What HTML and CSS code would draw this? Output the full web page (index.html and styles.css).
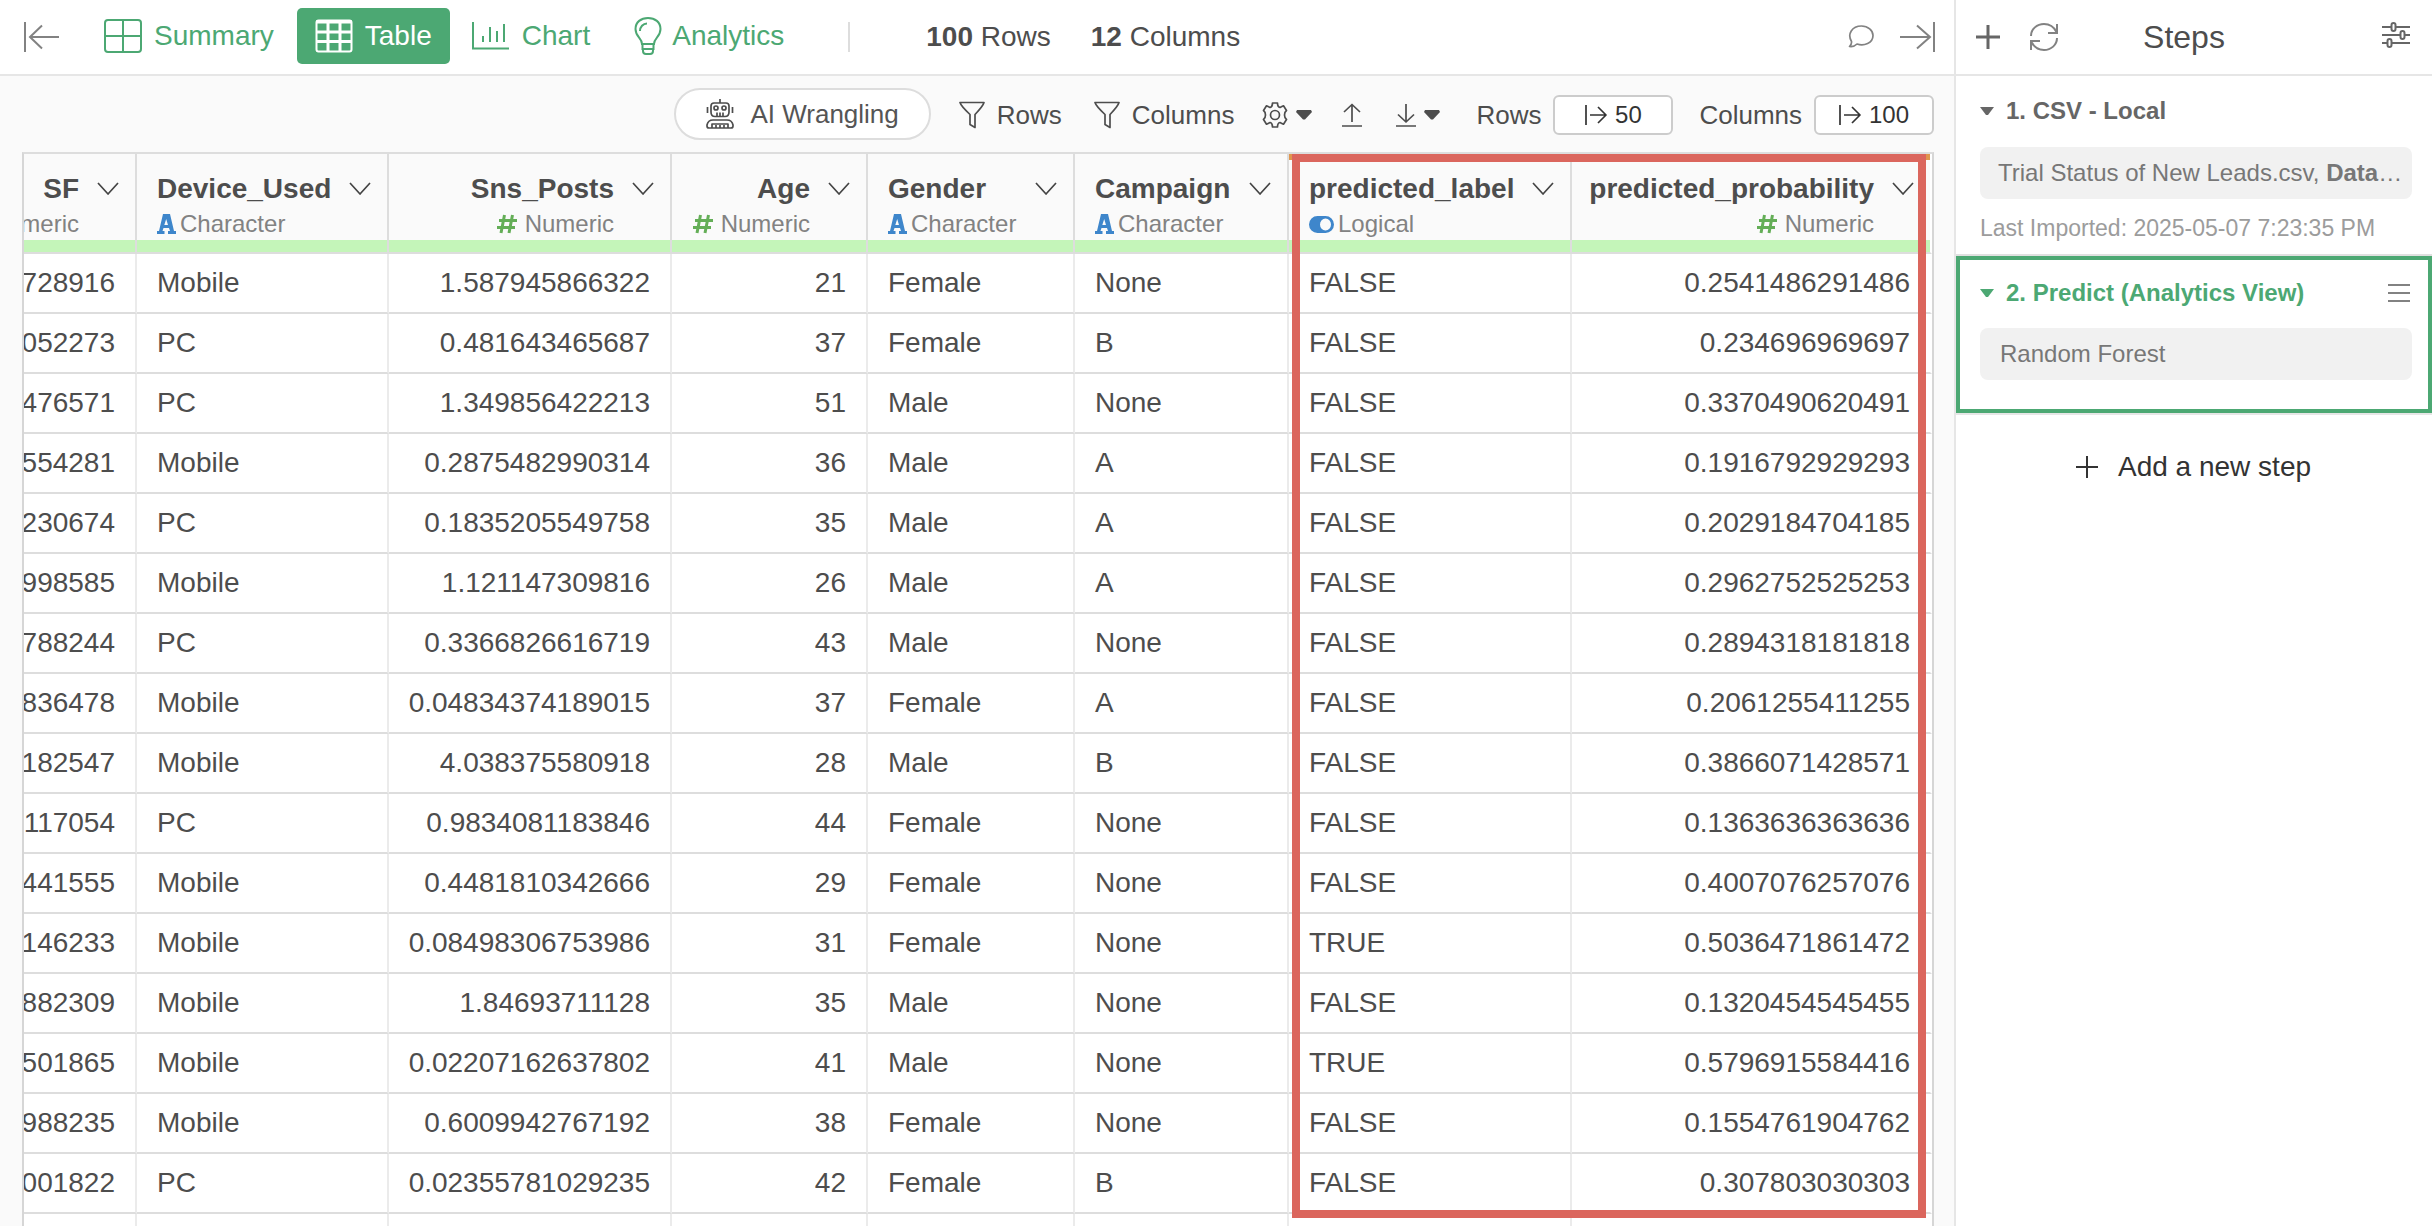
FILE: index.html
```html
<!DOCTYPE html>
<html lang="en">
<head>
<meta charset="utf-8">
<title>Data table</title>
<link rel="stylesheet" href="styles.css">
</head>
<body>
<div class="app">
  <main class="main">
    <header class="topbar">
      <button class="icon-btn" aria-label="Collapse left"><svg width="36" height="30" viewBox="0 0 36 30" class="ln gray"><path d="M1 0V30M6 15H35M18 3.500L6 15L18 26.500"/></svg></button>
      <nav class="tabs">
        <a class="tab" href="#summary"><svg width="38" height="34" viewBox="0 0 38 34" class="ln"><rect x="1" y="1" width="36" height="32" rx="3"/><path d="M19 1V33M1 17H37"/></svg>Summary</a>
        <a class="tab active" href="#table"><svg width="38" height="34" viewBox="0 0 38 34" class="ln"><rect x="1.500" y="1.500" width="35" height="31" rx="2"/><path stroke-width="3" d="M1 3H37M13 3V33M25 3V33M1 13H37M1 22.500H37"/></svg>Table</a>
        <a class="tab" href="#chart"><svg width="38" height="30" viewBox="0 0 38 30" class="ln"><path d="M1 1V27.500H37M11 21V15M18 21V6M25 21V10M32 21V3"/></svg>Chart</a>
        <a class="tab bulb" href="#analytics"><svg width="28" height="38" viewBox="0 0 28 38" class="ln"><path d="M8 27C8 21 1.500 20 1.500 12C1.500 5 7 1 14 1S26.500 5 26.500 12C26.500 20 20 21 20 27ZM8.500 27V32H19.500V27M9 32V34Q9 37 12 37H16Q19 37 19 34V32M6 14C6 10 9 6.500 13 6.500"/></svg>Analytics</a>
      </nav>
      <span class="divider"></span>
      <p class="count"><b>100</b> Rows</p>
      <p class="count"><b>12</b> Columns</p>
      <div class="topbar-end">
        <button class="icon-btn" aria-label="Comments"><svg width="26" height="24" viewBox="0 0 26 24" class="ln gray thin"><path d="M3.500 16.500C-1 9 4 1 13.500 1C20 1 25 5.500 25 10.500C25 18 16 21.500 9 19C7 21 4.500 22 1.500 21.500C3 20 3.800 18.500 3.500 16.500Z"/></svg></button>
        <button class="icon-btn" aria-label="Collapse right"><svg width="36" height="30" viewBox="0 0 36 30" class="ln gray"><path d="M34 0V30M0 15H30M17 3.500L30 15L17 26.500"/></svg></button>
      </div>
    </header>

    <div class="toolbar">
      <button class="ai"><svg width="28" height="32" viewBox="0 0 28 32" class="ln thin"><path d="M14 1V5M1.500 9V15M26.500 9V15M5 8Q5 5 8 5H20Q23 5 23 8V14Q23 18.500 19 18.500H9Q5 18.500 5 14ZM11 18V14.500M14 18V14.500M17 18V14.500"/><circle cx="10" cy="10" r="2"/><circle cx="18" cy="10" r="2"/><path d="M7 22H21Q26 22 27 27V28Q27 30 25 30H3Q1 30 1 28V27Q2 22 7 22ZM6 30V26H22V30M10 30V27M14 30V27M18 30V27"/></svg>AI Wrangling</button>
      <button class="tool"><svg width="26" height="28" viewBox="0 0 26 28" class="ln thin"><path d="M1 1.500H25Q24 5 16 13.500V26.500L11 23.500V13.500Q2 5 1 1.500Z"/></svg>Rows</button>
      <button class="tool second"><svg width="26" height="28" viewBox="0 0 26 28" class="ln thin"><path d="M1 1.500H25Q24 5 16 13.500V26.500L11 23.500V13.500Q2 5 1 1.500Z"/></svg>Columns</button>
      <button class="tool gear" aria-label="Settings"><svg width="26" height="26" viewBox="0 0 26 26" class="ln thin"><circle cx="13" cy="13" r="4.500"/><path d="M10.500 1H15.500Q15.500 5 18 5.500Q20 4.500 21.500 3.800L24.500 8.500Q22.500 10 22.500 13Q22.500 16 24.500 17.500L21.500 22.200Q20 21.500 18 20.500Q15.500 21 15.500 25H10.500Q10.500 21 8 20.500Q6 21.500 4.500 22.200L1.500 17.500Q3.500 16 3.500 13Q3.500 10 1.500 8.500L4.500 3.800Q6 4.500 8 5.500Q10.500 5 10.500 1Z"/></svg><svg width="16" height="10" viewBox="0 0 16 10" class="fill"><path d="M1 0H15L16 2L9 9.500H7L0 2Z"/></svg></button>
      <button class="tool up" aria-label="Upload"><svg width="20" height="24" viewBox="0 0 20 24" class="ln thin"><path d="M0 23H20M10 19V1.500M2 9L10 1.500L18 9"/></svg></button>
      <button class="tool down" aria-label="Download"><svg width="20" height="24" viewBox="0 0 20 24" class="ln thin"><path d="M0 23H20M10 1V19M2 11.500L10 19L18 11.500"/></svg><svg width="16" height="10" viewBox="0 0 16 10" class="fill"><path d="M1 0H15L16 2L9 9.500H7L0 2Z"/></svg></button>
      <div class="limit"><span id="lr">Rows</span><button class="limit-btn" aria-describedby="lr"><svg width="22" height="20" viewBox="0 0 22 20" class="ln thin"><path d="M1 0V20M5 10H21M13 2L21 10L13 18"/></svg>50</button></div>
      <div class="limit cols"><span id="lc">Columns</span><button class="limit-btn" aria-describedby="lc"><svg width="22" height="20" viewBox="0 0 22 20" class="ln thin"><path d="M1 0V20M5 10H21M13 2L21 10L13 18"/></svg>100</button></div>
    </div>

    <div class="grid-wrap">
      <div class="grid">
        <table>
          <colgroup><col class="c-sf"><col class="c-device"><col class="c-posts"><col class="c-age"><col class="c-gender"><col class="c-campaign"><col class="c-label"><col class="c-prob"></colgroup>
          <thead id="head"></thead>
          <tbody id="body"></tbody>
        </table>
        <div class="highlight"></div>
      </div>
    </div>
  </main>

  <aside class="steps">
    <header class="steps-head">
      <div class="steps-tools">
        <button class="icon-btn" aria-label="Add"><svg width="24" height="24" viewBox="0 0 24 24" class="ln dark"><path stroke-width="3" d="M12 0V24M0 12H24"/></svg></button>
        <button class="icon-btn" aria-label="Refresh"><svg width="28" height="28" viewBox="0 0 28 28" class="ln gray"><path d="M1 13C1 6 7 1 14 1C19.500 1 24 4 26.500 9M27 1V10H18M27 15C27 22 21 27 14 27C8.500 27 4 24 1.500 19M1 27V18H10"/></svg></button>
      </div>
      <h1>Steps</h1>
      <button class="icon-btn" aria-label="Step settings"><svg width="28" height="26" viewBox="0 0 28 26" class="ln dark"><path d="M0 5H9M14 5H28M0 13H18M23 13H28M0 21H5M10 21H28"/><rect x="9.500" y="1" width="4" height="8" rx="2"/><rect x="18.500" y="9" width="4" height="8" rx="2"/><rect x="5.500" y="17" width="4" height="8" rx="2"/></svg></button>
    </header>
    <section class="step">
      <h2><svg width="14" height="8" viewBox="0 0 14 8" class="fill"><path d="M0 0H14L8 8H6Z"/></svg>1. CSV - Local</h2>
      <p class="pill tight">Trial Status of New Leads.csv, <b>Data</b>…</p>
      <p class="note">Last Imported: 2025-05-07 7:23:35 PM</p>
    </section>
    <section class="step selected">
      <div class="step-row">
        <h2><svg width="14" height="8" viewBox="0 0 14 8" class="fill"><path d="M0 0H14L8 8H6Z"/></svg>2. Predict (Analytics View)</h2>
        <button class="icon-btn" aria-label="Step menu"><svg width="22" height="18" viewBox="0 0 22 18" class="ln gray"><path d="M0 1H22M0 9H22M0 17H22"/></svg></button>
      </div>
      <p class="pill">Random Forest</p>
    </section>
    <button class="add"><svg width="22" height="22" viewBox="0 0 22 22" class="ln"><path d="M11 0V22M0 11H22"/></svg>Add a new step</button>
  </aside>
</div>
<script src="table.js"></script>
</body>
</html>
```
FILE: styles.css
```css
* { box-sizing: border-box; }
body { margin: 0; background: #fff; color: #4d4d4d; font: 28px/32px "Liberation Sans", Arial, sans-serif; }
h1, h2, p { margin: 0; font-weight: normal; }
button { padding: 0; border: 0; background: none; color: inherit; font: inherit; cursor: pointer; }
svg { display: block; flex: none; }
.ln { fill: none; stroke: currentColor; stroke-width: 2; }
.ln.thin { stroke-width: 1.7; stroke-linejoin: round; }
.fill { fill: currentColor; }
.gray { color: #828282; }
.dark { color: #666; }
.icon-btn { display: flex; }

.app { display: grid; grid-template-columns: minmax(0, 1fr) 478px; height: 100vh; overflow: hidden; }
.main { display: flex; flex-direction: column; min-width: 0; min-height: 0; background: #fafafa; }

.topbar { display: flex; align-items: center; flex: none; height: 76px; padding: 0 18px 0 24px; border-bottom: 2px solid #e6e6e6; background: #fff; }
.tabs { display: flex; align-items: center; margin-left: 26px; }
.tab { display: flex; align-items: center; gap: 12px; height: 56px; margin-bottom: 2px; padding: 0 18px; border-radius: 5px; color: #4ca873; text-decoration: none; }
.tab.active { margin: 0 4px 2px 5px; background: #4ca873; color: #fff; }
.tab.bulb { margin-left: 8px; gap: 10px; }
.divider { width: 2px; height: 30px; margin: 0 76px 0 46px; background: #ddd; }
.count { margin-right: 40px; }
.topbar-end { display: flex; align-items: center; gap: 26px; margin-left: auto; }

.toolbar { display: flex; align-items: center; justify-content: flex-end; flex: none; height: 76px; padding: 2px 20px 0; font-size: 26px; }
.ai { display: flex; align-items: center; gap: 16px; height: 52px; margin-bottom: 2px; padding: 0 30px; border: 2px solid #ddd; border-radius: 26px; background: #fff; color: #555; }
.ai svg { color: #4d4d4d; }
.tool { display: flex; align-items: center; gap: 12px; margin-left: 28px; }
.tool.second { margin-left: 32px; }
.tool.gear { gap: 8px; }
.tool.up { margin-left: 30px; }
.tool.down { margin-left: 34px; gap: 8px; }
.limit { display: flex; align-items: center; gap: 12px; margin-left: 36px; }
.limit.cols { margin-left: 26px; }
.limit-btn { display: flex; align-items: center; justify-content: center; gap: 8px; width: 120px; height: 40px; border: 2px solid #ccc; border-radius: 6px; background: #fff; color: #333; font-size: 24px; }

.grid-wrap { flex: 1; min-height: 0; padding: 0 20px 0 22px; }
.grid { position: relative; height: 100%; overflow: hidden; border: 2px solid #ccc; border-color: #ddd #d6d6d6; border-bottom: 0; background: #fff; }
table { width: 100%; table-layout: fixed; border-collapse: separate; border-spacing: 0; }
.c-sf { width: 113px; }
.c-device { width: 252px; }
.c-posts { width: 283px; }
.c-age { width: 196px; }
.c-gender { width: 207px; }
.c-campaign { width: 214px; }
.c-label { width: 283px; }
th { height: 100px; padding: 19px 16px 0 20px; border-right: 2px solid #ddd; border-bottom: 2px solid #ddd; background: linear-gradient(#c4f5b9, #c4f5b9) bottom / 100% 12px no-repeat #fafafa; text-align: left; vertical-align: top; overflow: hidden; }
th.made { box-shadow: inset 0 6px #e0964e; }
.name { display: flex; align-items: center; justify-content: space-between; gap: 18px; }
.type { display: flex; align-items: center; gap: 4px; height: 28px; margin-top: 5px; color: #828282; font-weight: normal; font-size: 24px; line-height: 28px; }
.a { color: #3e86cb; }
.hash { color: #64ae57; }
.num .name { justify-content: flex-end; }
.num .type { justify-content: flex-end; gap: 8px; margin-right: 40px; }
.name svg { color: #444; }
td { height: 60px; padding: 0 20px; border-right: 2px solid #ebebeb; border-bottom: 2px solid #ddd; overflow: hidden; }
td.num > span { display: flex; justify-content: flex-end; }
th:first-child, td:first-child { padding-left: 0; }
th:last-child, td:last-child { border-right-color: #fff; }
.highlight { position: absolute; top: 0; right: 6px; width: 634px; height: 1064px; border: 8px solid #db665d; }

.steps { border-left: 2px solid #e6e6e6; background: #fff; }
.steps-head { display: grid; grid-template-columns: 1fr auto 1fr; align-items: center; height: 76px; padding: 0 22px 0 20px; border-bottom: 2px solid #e6e6e6; }
.steps-head > .icon-btn { justify-self: end; margin-bottom: 4px; }
.steps-head h1 { margin-right: 18px; font-size: 32px; }
.steps-tools { display: flex; align-items: center; gap: 30px; }
.step { padding: 20px 20px 0 24px; border-bottom: 2px solid #e0e0e0; font-size: 24px; line-height: 30px; }
.step h2 { display: flex; align-items: center; gap: 12px; color: #666; font-size: 24px; font-weight: bold; }
.pill { height: 52px; padding: 0 20px; border-radius: 8px; background: #f1f1f1; color: #777; line-height: 52px; white-space: nowrap; overflow: hidden; }
.pill.tight { margin-top: 21px; padding: 0 8px 0 18px; }
.note { margin-top: 14px; padding-bottom: 11px; color: #9c9c9c; font-size: 23px; }
.selected { padding: 18px 18px 29px 20px; border: 4px solid #4ca873; }
.selected h2 { color: #4ca873; }
.step-row { display: flex; align-items: center; justify-content: space-between; }
.selected .pill { margin-top: 20px; margin-right: -2px; }
.add { display: flex; align-items: center; gap: 20px; width: 100%; padding: 36px 0 0 120px; border-top: 2px solid #e6e6e6; color: #333; }
```
FILE: table.js
```js
const columns = [
  ["SF", "n"], ["Device_Used", "c"], ["Sns_Posts", "n"], ["Age", "n"],
  ["Gender", "c"], ["Campaign", "c"], ["predicted_label", "l"], ["predicted_probability", "n"]
];
const rows = `728916|Mobile|1.587945866322|21|Female|None|FALSE|0.2541486291486
052273|PC|0.481643465687|37|Female|B|FALSE|0.234696969697
476571|PC|1.349856422213|51|Male|None|FALSE|0.3370490620491
554281|Mobile|0.2875482990314|36|Male|A|FALSE|0.1916792929293
230674|PC|0.1835205549758|35|Male|A|FALSE|0.2029184704185
998585|Mobile|1.121147309816|26|Male|A|FALSE|0.2962752525253
788244|PC|0.3366826616719|43|Male|None|FALSE|0.2894318181818
836478|Mobile|0.04834374189015|37|Female|A|FALSE|0.2061255411255
182547|Mobile|4.038375580918|28|Male|B|FALSE|0.3866071428571
117054|PC|0.9834081183846|44|Female|None|FALSE|0.1363636363636
441555|Mobile|0.4481810342666|29|Female|None|FALSE|0.4007076257076
146233|Mobile|0.08498306753986|31|Female|None|TRUE|0.5036471861472
882309|Mobile|1.84693711128|35|Male|None|FALSE|0.1320454545455
501865|Mobile|0.02207162637802|41|Male|None|TRUE|0.5796915584416
988235|Mobile|0.6009942767192|38|Female|None|FALSE|0.1554761904762
001822|PC|0.02355781029235|42|Female|B|FALSE|0.307803030303
|||||||`.split("\n").map(r => r.split("|"));

const chevron = '<svg width="22" height="14" viewBox="0 0 22 14" class="ln thin"><path d="M1 1L11 12L21 1"/></svg>';
const types = {
  n: '<svg width="20" height="20" viewBox="0 0 20 20" class="ln hash"><path stroke-width="3" d="M7.500 1L4 19M15.500 1L12 19M2 6.500H20M0 13.500H18"/></svg>Numeric',
  c: '<svg width="19" height="20" viewBox="0 0 19 20" class="a fill"><path fill-rule="evenodd" d="M6 0H13L17 17H19V20H11V17H13L12 14H6.500L5.500 17H7.500V20H0V17H2ZM9.200 5L7.300 11H11Z"/></svg>Character',
  l: '<svg width="25" height="17" viewBox="0 0 25 17" class="a fill"><path fill-rule="evenodd" d="M8.500 0H16.500A8.500 8.500 0 0 1 16.500 17H8.500A8.500 8.500 0 0 1 8.500 0ZM16.500 2.500A5.500 6 0 0 0 16.500 14.500A5.500 6 0 0 0 16.500 2.500Z"/></svg>Logical'
};

document.getElementById("head").innerHTML = "<tr>" + columns.map(([name, type], i) =>
  `<th scope="col" class="${type === "n" ? "num" : ""}${i > 5 ? " made" : ""}"><div class="name">${name}${chevron}</div><div class="type">${types[type]}</div></th>`
).join("") + "</tr>";

document.getElementById("body").innerHTML = rows.map(row => "<tr>" + row.map((value, i) =>
  `<td class="${columns[i][1] === "n" ? "num" : ""}"><span>${value}</span></td>`
).join("") + "</tr>").join("");
```
